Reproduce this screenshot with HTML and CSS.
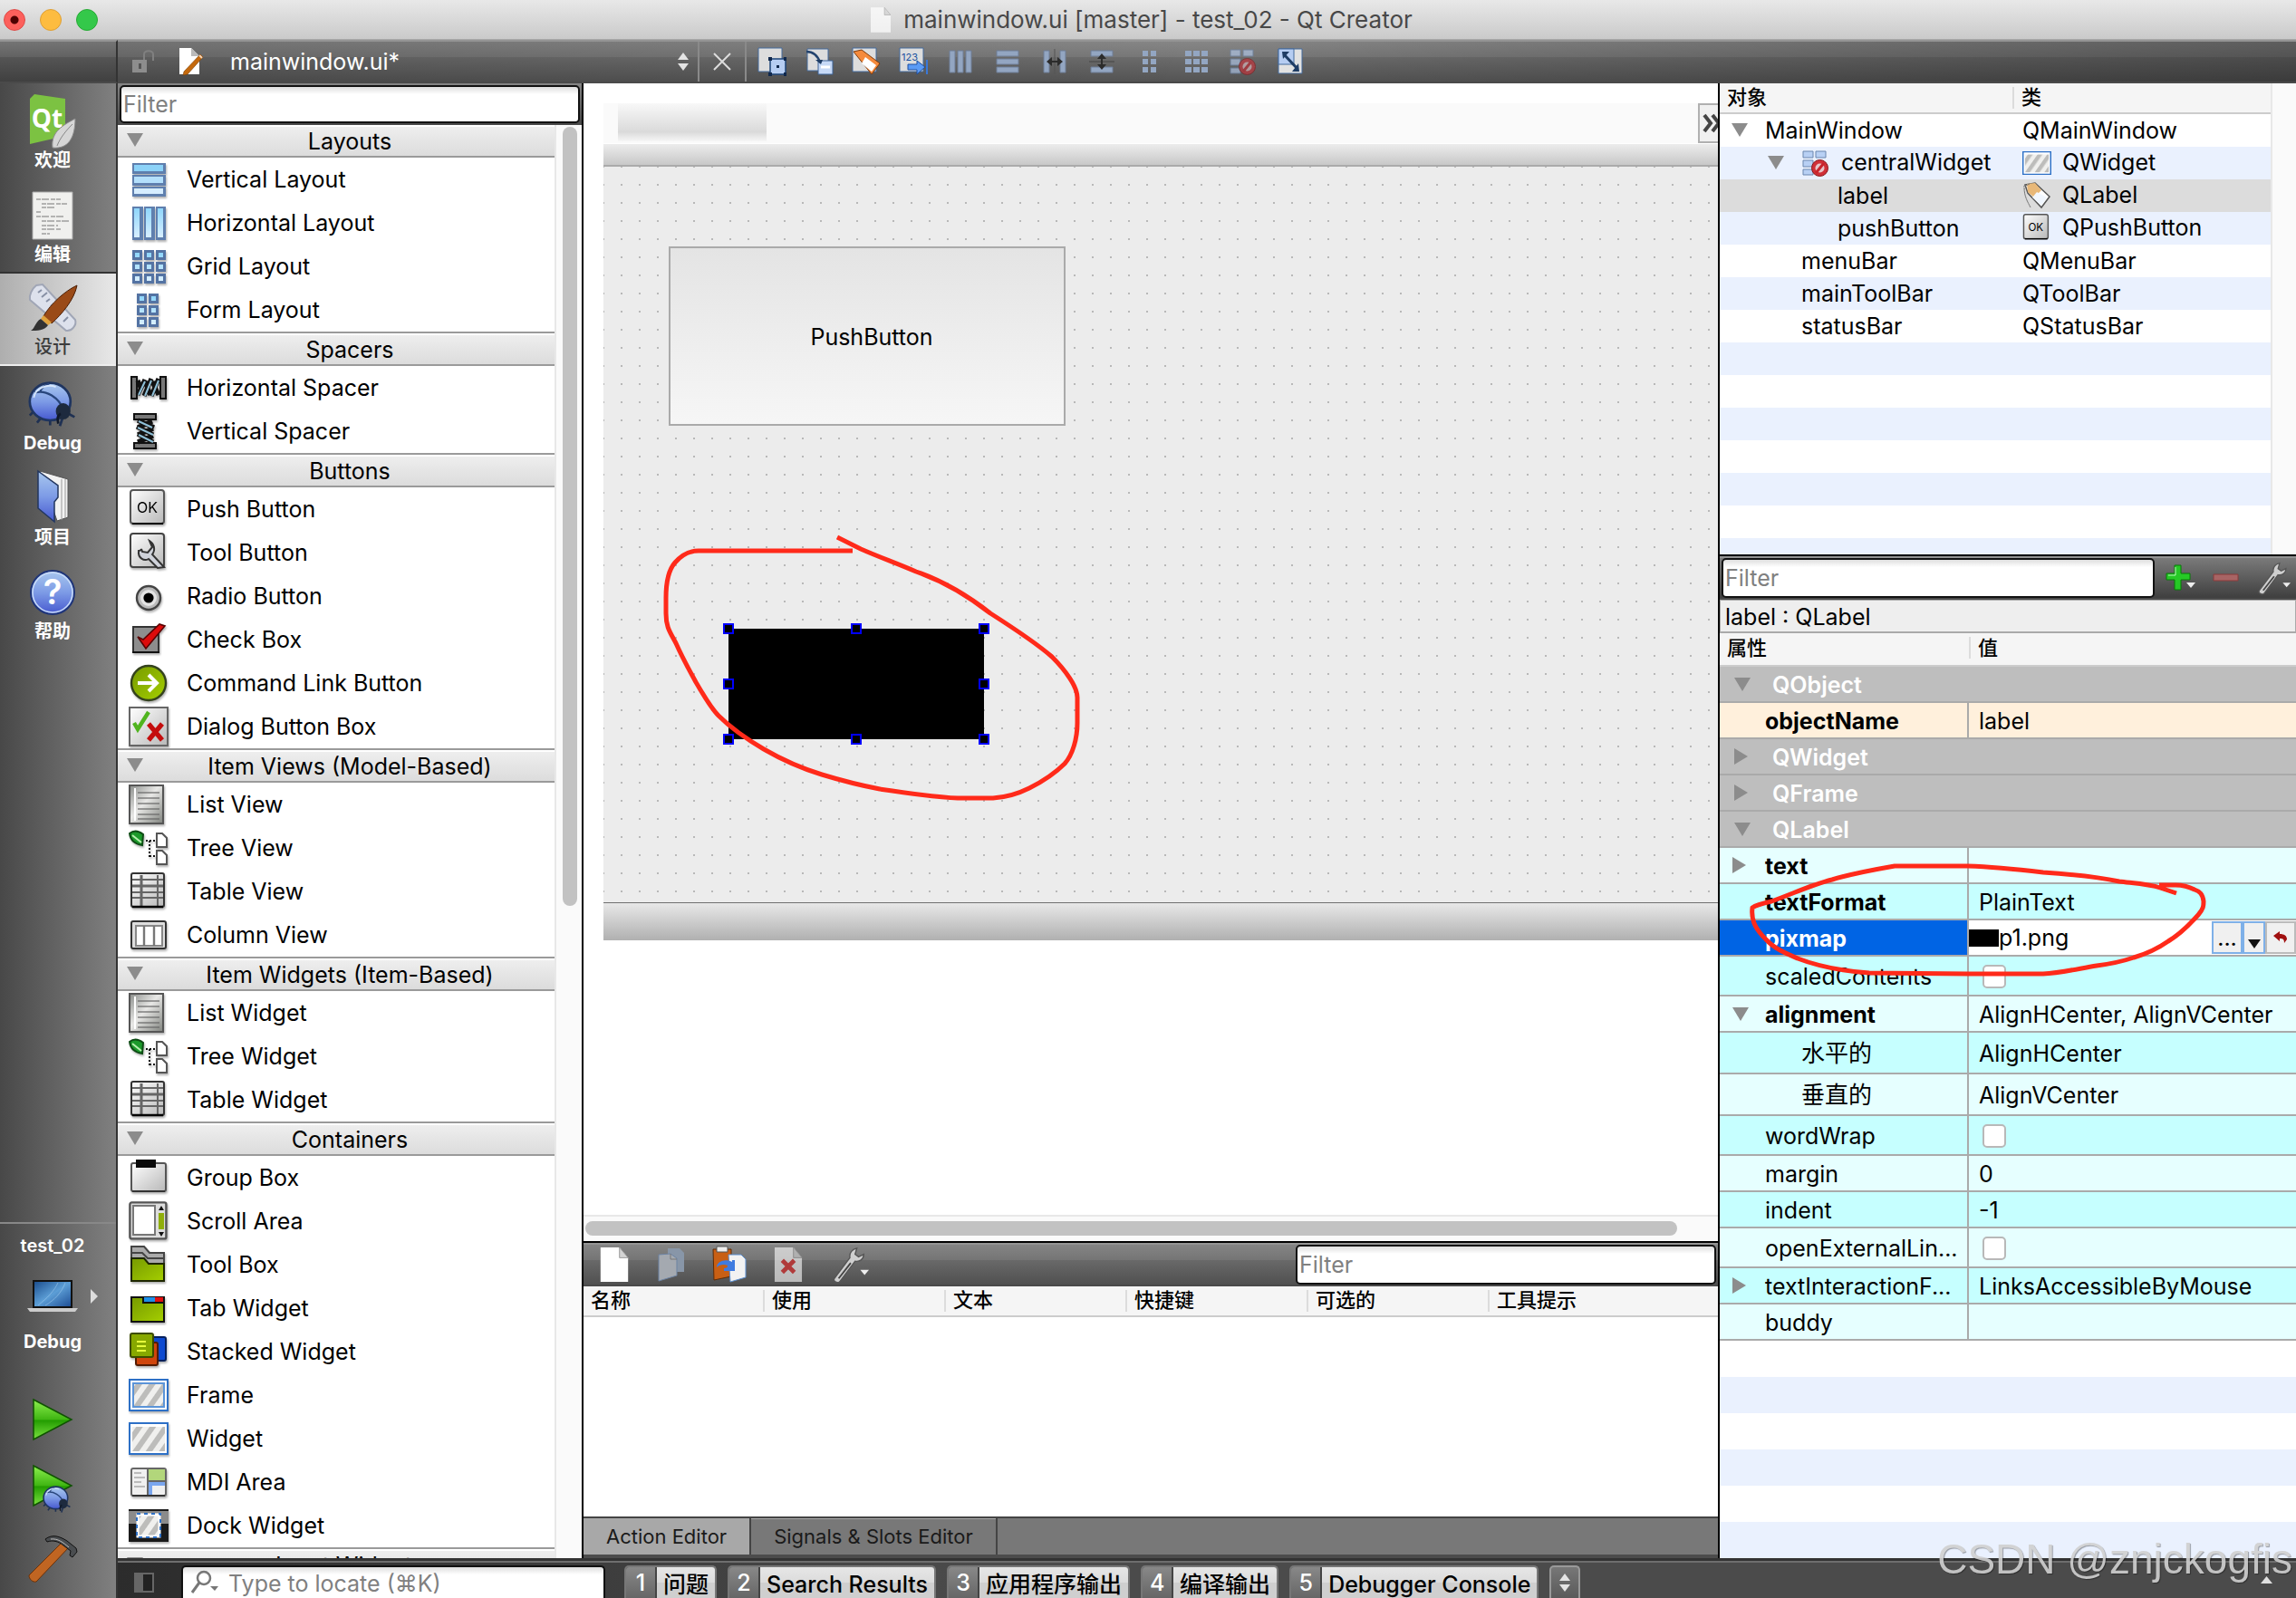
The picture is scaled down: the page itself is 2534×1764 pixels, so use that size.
FILE: index.html
```html
<!DOCTYPE html>
<html lang="zh-CN">
<head>
<meta charset="utf-8">
<title>mainwindow.ui [master] - test_02 - Qt Creator</title>
<link rel="stylesheet" href="styles.css">
</head>
<body>
<svg class="defs" width="0" height="0" aria-hidden="true">
  <defs>
    <linearGradient id="blueV" x2="0" y2="1"><stop offset="0" stop-color="#8fd6fb"/><stop offset="1" stop-color="#d8efff"/></linearGradient>
    <linearGradient id="grayV" x2="1" y2="1"><stop offset="0" stop-color="#fff"/><stop offset="1" stop-color="#b8b8b8"/></linearGradient>
    <linearGradient id="grayD" x2="1" y2="1"><stop offset="0" stop-color="#8a8d8a"/><stop offset=".45" stop-color="#e8e8e6"/><stop offset="1" stop-color="#7f827d"/></linearGradient>
    <linearGradient id="limeV" x2="1" y2="1"><stop offset="0" stop-color="#769a00"/><stop offset="1" stop-color="#a5cf00"/></linearGradient>
    <linearGradient id="indigo" x2="0" y2="1"><stop offset="0" stop-color="#a9c8ee"/><stop offset=".5" stop-color="#7d9be6"/><stop offset="1" stop-color="#4658cf"/></linearGradient>
    <linearGradient id="play" x2="0" y2="1"><stop offset="0" stop-color="#8df04e"/><stop offset=".5" stop-color="#3fb512"/><stop offset=".52" stop-color="#229c00"/><stop offset="1" stop-color="#7be33f"/></linearGradient>
    <linearGradient id="steel" x2="1" y2="1"><stop offset="0" stop-color="#bfc7d2"/><stop offset="1" stop-color="#9aa4b4"/></linearGradient>
    <linearGradient id="screen" x2="1" y2="1"><stop offset="0" stop-color="#1c4f8f"/><stop offset=".5" stop-color="#5c9ed6"/><stop offset="1" stop-color="#1f4f96"/></linearGradient>
    <pattern id="stripes" width="6" height="6" patternUnits="userSpaceOnUse" patternTransform="rotate(35)"><path fill="#f0f0ee" d="M0 0h6v6H0z"/><path fill="#bdbdbb" d="M0 0h3v6H0z"/></pattern>
    <symbol id="i-vlayout" viewBox="0 0 22 22"><path fill="#5f7fae" d="M2 2h18.500v6H2zM2 8.500h18.500v6H2zM2 15h18.500v5.500H2z"/><path fill="#8cd2f8" d="M3 3h16v3.500H3z"/><path fill="#b4e0fc" d="M3 9.500h16V13H3z"/><path fill="#d6edff" d="M3 16h16v3H3z"/></symbol>
    <symbol id="i-hlayout" viewBox="0 0 22 22"><path fill="#5f7fae" d="M2 2h6v18.500H2zM8.500 2h6v18.500h-6zM15 2h5.500v18.500H15z"/><path fill="url(#blueV)" d="M3 3h3v16H3zM9.500 3h3v16h-3zM16 3h3v16h-3z"/></symbol>
    <symbol id="i-glayout" viewBox="0 0 22 22"><path fill="#5473a3" d="M2 2h5.500v5.500H2zM8.500 2H14v5.500H8.500zM15 2h5.500v5.500H15zM2 8.500h5.500V14H2zM8.500 8.500H14V14H8.500zM15 8.500h5.500V14H15zM2 15h5.500v5.500H2zM8.500 15H14v5.500H8.500zM15 15h5.500v5.500H15z"/><path fill="url(#blueV)" d="M3.500 3.500h2.500v2.500H3.500zM10 3.500h2.500v2.500H10zM16.500 3.500H19v2.500h-2.500zM3.500 10h2.500v2.500H3.500zM10 10h2.500v2.500H10zM16.500 10H19v2.500h-2.500zM3.500 16.500h2.500V19H3.500zM10 16.500h2.500V19H10zM16.500 16.500H19V19h-2.500z"/></symbol>
    <symbol id="i-flayout" viewBox="0 0 22 22"><path fill="#5473a3" d="M4.500 2H10v5.500H4.500zM11 2h5.500v5.500H11zM4.500 8.500H10V14H4.500zM11 8.500h5.500V14H11zM4.500 15H10v5.500H4.500zM11 15h5.500v5.500H11z"/><path fill="url(#blueV)" d="M6 3.500h2.500v2.500H6zM12.500 3.500H15v2.500h-2.500zM6 10h2.500v2.500H6zM12.500 10H15v2.500h-2.500zM6 16.500h2.500V19H6zM12.500 16.500H15V19h-2.500z"/></symbol>
    <symbol id="i-hspacer" viewBox="0 0 22 22"><path fill="#777" stroke="#111" d="M1.500 5h3v12h-3zM17.500 5h3v12h-3z"/><path fill="none" stroke="#111" stroke-width="2.600" d="M5 15L9 6.500M8.500 15.500l4-9.500M12.500 15.500l4-9.500M5 7L7 12M9 7.500l3 7.500M13 7.500l3.500 7.500"/><path fill="none" stroke="#8fc0d8" d="M5.500 15L9 7.500M9 15.500l3.500-8.500M13 15.500l3.500-8.500"/></symbol>
    <symbol id="i-vspacer" viewBox="0 0 22 22"><path fill="#777" stroke="#111" d="M3 1.500h12v3H3zM3 17.500h12v3H3z"/><path fill="none" stroke="#111" stroke-width="2.600" d="M5 5l9 4M4.500 8.500l9 4.500M5 12.500l8.500 4.500M13 5.500L5 9M13.500 9.500L5 13M13.500 13.500L5 17"/><path fill="none" stroke="#8fc0d8" d="M5.500 5.500L13 9M5 9l8.500 4M5.500 13l8 4"/></symbol>
    <symbol id="i-ok" viewBox="0 0 22 22"><rect x="1" y=".5" width="18.500" height="18.500" rx="1.500" fill="url(#grayV)" stroke="#555"/><path stroke="#000" d="M2 19h17" fill="none"/><text x="10.200" y="13" font-family="Inter, sans-serif" font-size="8" text-anchor="middle" fill="#000">OK</text></symbol>
    <symbol id="i-tool" viewBox="0 0 22 22"><rect x="1" y=".5" width="18.500" height="18.500" rx="1.500" fill="url(#grayV)" stroke="#444"/><path d="M19.500 19l-6.500-7c2-2.500 1-6-1.500-7.500L13 8l-2.500 3-3-.5C7 8 7 10 5.500 10c-.5 4 3 6 5.500 4.500l5 5z" fill="#cfd2da" stroke="#333"/></symbol>
    <symbol id="i-radio" viewBox="0 0 22 22"><circle cx="11" cy="12" r="6.500" fill="#bbb" stroke="#444" stroke-width="1.200"/><circle cx="11" cy="12" r="4.500" fill="#e4e4e4"/><circle cx="11" cy="12" r="2.800" fill="#000"/></symbol>
    <symbol id="i-check" viewBox="0 0 22 22"><path fill="#8d8d8d" stroke="#333" d="M2.500 4h14v14h-14z"/><path stroke="#111" d="M2 18h15" fill="none"/><path d="M5 9.500l3 1.500L17 2.500l3 1L9.500 16z" fill="#dd0b0b" stroke="#5a0000" stroke-width=".8"/></symbol>
    <symbol id="i-link" viewBox="0 0 22 22"><circle cx="11" cy="11" r="9.500" fill="url(#limeV)" stroke="#34421d" stroke-width="1.200"/><path d="M5 11h10M11 6.500l4.500 4.500-4.500 4.500" fill="none" stroke="#fff" stroke-width="2"/></symbol>
    <symbol id="i-dialog" viewBox="0 0 22 22"><path fill="url(#grayV)" stroke="#666" d="M.5.500h21v21H.5z"/><path d="M3 9l2 3.500L11 3" fill="none" stroke="#4fb41e" stroke-width="2.200"/><path d="M11 9.500l7.500 9M18.500 9.500l-7.500 9" stroke="#c40d0d" stroke-width="2.600"/></symbol>
    <symbol id="i-list" viewBox="0 0 22 22"><path fill="url(#grayD)" stroke="#555" d="M.5.500h18.500v21H.5z"/><path d="M5 4.500h12M5 7.500h12M5 10.500h12M5 13.500h12M5 16.500h12M5 19h12" stroke="#666" opacity=".6"/><path d="M3.500 2v18" stroke="#fff"/></symbol>
    <symbol id="i-tree" viewBox="0 0 22 22"><path d="M.5 3C3 1 6 2 8 3.500l-.5 6C4 9 1 7 .5 3z" fill="#1c9a2b" stroke="#0d4c14"/><path d="M2 4l5 4" stroke="#b8f0b0"/><path d="M9.500 7h5M11.500 7v9M11.500 15.500H15" stroke="#111" stroke-dasharray="1 1" fill="none"/><path d="M15.500 3h3l2.500 2.500v5h-5.500zM15.500 12.500h3L21 15v5h-5.500z" fill="#fff" stroke="#555"/></symbol>
    <symbol id="i-table" viewBox="0 0 22 22"><rect x="1.500" y="1" width="18" height="18.500" rx="1" fill="url(#grayV)" stroke="#333"/><path d="M2 4.500h17M2 11.500h17M2 14.500h17M16 2v17" stroke="#666" fill="none"/><path d="M2 8h17M7 2v17" stroke="#666" stroke-width="1.500"/><path d="M2 19.500h17" stroke="#000" stroke-width="1.200"/></symbol>
    <symbol id="i-column" viewBox="0 0 22 22"><rect x="1.500" y="3.500" width="19" height="15" rx="1" fill="#ddd" stroke="#333"/><path fill="#fff" stroke="#888" d="M4 6h14.500v11H4z"/><path d="M8.500 6v11M14 6v11" stroke="#777" stroke-width="1.200"/></symbol>
    <symbol id="i-group" viewBox="0 0 22 22"><rect x="1.500" y="3" width="19" height="15.500" rx="1" fill="url(#grayV)" stroke="#555"/><path d="M4 1h11v4.500H4z" fill="#0a0a0a"/><path d="M2 18.500h18" stroke="#333"/></symbol>
    <symbol id="i-scroll" viewBox="0 0 22 22"><rect x=".7" y=".7" width="20" height="20" rx="1" fill="#ddd" stroke="#555" stroke-width="1.200"/><path fill="#fff" stroke="#777" d="M2.500 2.500h12v16h-12z"/><path fill="#8fae0a" d="M16.500 6.500h3v9h-3z"/><path d="M16.500 5L18 2.500 19.500 5zM16.500 17l1.500 2.500 1.500-2.500z" fill="#111"/></symbol>
    <symbol id="i-toolbox" viewBox="0 0 22 22"><path d="M1.500 1h7l3 3.500h8v6h-18z" fill="#aaa" stroke="#444"/><path d="M1.500 4.500h6l3 3h9" fill="none" stroke="#444"/><path d="M1.500 7.500h7l2.500 3h8.500v9.500h-18z" fill="url(#limeV)" stroke="#1d2600"/></symbol>
    <symbol id="i-tab" viewBox="0 0 22 22"><path d="M1.500 5h18v13.500h-18z" fill="url(#limeV)" stroke="#111"/><path d="M8 5h6.500v2.500H8z" fill="#1d8fe8"/><path d="M14.500 5H19v2.500h-4.500z" fill="#e01010"/><path d="M8 5v3h12" fill="none" stroke="#111"/></symbol>
    <symbol id="i-stacked" viewBox="0 0 22 22"><rect x="12" y="3" width="8.500" height="13" rx="1" fill="#0d49d0" stroke="#06205c"/><rect x="4" y="6" width="12" height="12.500" rx="1" fill="#d0450c" stroke="#541a00"/><rect x="1" y="1" width="12.500" height="13" rx="1" fill="#87a800" stroke="#3c4b00"/><path d="M4.500 5.500h5M4.500 8h5M4.500 10.500h5" stroke="#e6ff3c"/></symbol>
    <symbol id="i-frame" viewBox="0 0 22 22"><path fill="#fff" stroke="#2d70c6" d="M.5 2.500h21v17H.5z"/><path fill="url(#stripes)" stroke="#5b94d8" d="M2.500 4.500h17v13h-17z"/></symbol>
    <symbol id="i-widget" viewBox="0 0 22 22"><path fill="#fff" stroke="#2d70c6" d="M.5 2.500h21v17H.5z"/><path fill="url(#stripes)" d="M2 4.500h18v13.500H2z"/></symbol>
    <symbol id="i-mdi" viewBox="0 0 22 22"><rect x="1.500" y="3.500" width="19" height="15" rx="1" fill="#f0f0f0" stroke="#666"/><path fill="#b2d67b" d="M11 4h9v6h-9z"/><path fill="#7aa6ee" d="M11 11h9v2h-9zM11 13h2v5h-2z"/><path d="M10.500 4v14M10.500 10.500H20" stroke="#666"/><path d="M3 6h4M3 8.500h6M3 11h4M3 13.500h6" stroke="#bbb"/><path d="M2 18.500h18" stroke="#333"/></symbol>
    <symbol id="i-dock" viewBox="0 0 22 22"><path fill="#1a1a1a" d="M0 2h22v18H0z"/><path fill="#8b8b8b" d="M0 3h22v7H0z"/><path fill="url(#stripes)" stroke="#fff" stroke-width="1.500" d="M5 5h12v12H5z"/><path d="M4.500 4.500h13v13h-13z" fill="none" stroke="#2d70c6" stroke-dasharray="2 2"/></symbol>
    <symbol id="i-nolayout" viewBox="0 0 32 32"><path fill="#b8d0f4" stroke="#6a86ae" d="M2 3h11v7H2zM16 3h11v7H16zM2 13h11v7H2zM2 23h11v6H2z"/><circle cx="20.500" cy="21.500" r="9" fill="#d03038" stroke="#8a1418"/><circle cx="20.500" cy="21.500" r="5" fill="#e6c4c8"/><path d="M16 27l9-11" stroke="#c8242c" stroke-width="3"/></symbol>
    <symbol id="i-label" viewBox="0 0 32 32"><path d="M3 4l11-2 16 15-9 12L6 13z" fill="#fff" stroke="#555" stroke-width="1.500"/><path d="M5 3l9-1 7 8-8 8-7-6z" fill="#e8b878"/><path d="M16 12l11 6-6 9-10-9z" fill="#f1f7ff"/><path d="M1 6l7-3M2 7c0 10 4 16 7 22" stroke="#777" fill="none"/></symbol>
    <symbol id="i-bug" viewBox="0 0 60 60"><path d="M6 40l-4 4M15 48l-4 5M27 50v6M46 40l11 6M42 48l-3 9M10 30l-6-2" stroke="#1f3153" stroke-width="3" fill="none"/><ellipse cx="27" cy="27" rx="25" ry="23" fill="url(#indigo)" stroke="#1f3560" stroke-width="3"/><path d="M8 16C22 12 38 22 44 38M26 5c-6 2-9 5-11 9" fill="none" stroke="#28457c" stroke-width="2.500"/><path d="M7 22C9 10 24 5 34 9" fill="none" stroke="#d6e6fb" stroke-width="2"/><ellipse cx="43" cy="39" rx="9" ry="10" fill="#1d2a3e"/><path d="M40 42c-5 2-4 8-3 12" stroke="#10192a" stroke-width="3" fill="none"/></symbol>
    <symbol id="i-wrench" viewBox="0 0 44 44"><path d="M4 38l18-24c-1-6 3-10 8-11l-2 7 4 3 6-3c0 6-5 9-10 8L10 42c-3 2-8-1-6-4z" fill="#cfcfcf" stroke="#555" stroke-width="1.500"/><path d="M9 38l14-18" stroke="#444" stroke-width="2" fill="none"/><path d="M34 28h10l-5 6z" fill="#eee"/></symbol>
    <symbol id="i-page" viewBox="0 0 32 40"><path d="M0 0h22l10 12v28H0z" fill="#fff"/><path d="M22 0v12h10z" fill="#d4d4d4" stroke="#999"/></symbol>
    <symbol id="i-updown" viewBox="0 0 12 20"><path d="M0 8l6-8 6 8zM0 12h12l-6 8z" fill="#e4e4e4"/></symbol>
  </defs>
</svg>

<header class="titlebar">
  <div class="lights"><i class="light red"></i><i class="light amber"></i><i class="light green"></i></div>
  <h1 class="window-title"><svg width="22" height="30"><use href="#i-page" opacity=".7"/></svg>mainwindow.ui [master] - test_02 - Qt Creator</h1>
</header>

<div class="workspace">
  <div class="toolbar corner"></div>
  <div class="toolbar editor-bar">
    <button class="file-combo">
      <svg width="26" height="26" viewBox="0 0 26 26"><path d="M0 11h16v14H0z" fill="#8d8d8d"/><path d="M13 11V5c0-5 10-5 10 0v7" fill="none" stroke="#808080" stroke-width="2"/><path d="M7 15h3v6H7z" fill="#555"/></svg>
      <svg width="28" height="32" viewBox="0 0 28 32"><path d="M1 1h13l9 9v20H1z" fill="#fff"/><path d="M14 1v9h9z" fill="#bbb"/><path d="M24 8l3 3L10 30l-5 1 1-4z" fill="#c4690d" stroke="#7a3f06" stroke-width=".6"/><path d="M23 9l3 3" stroke="#f6d6b8" stroke-width="2"/></svg>
      <span class="file-name">mainwindow.ui*</span>
      <svg width="12" height="20"><use href="#i-updown"/></svg>
    </button>
    <button class="close-doc" aria-label="Close"><svg width="20" height="20" viewBox="0 0 20 20"><path d="M1 1l18 18M19 1L1 19" stroke="#ddd" stroke-width="2"/></svg></button>
    <div class="tools">
      <button aria-label="Edit Widgets"><svg viewBox="0 0 32 32"><path fill="#ddd" stroke="#456a9c" d="M1 1h26v26H1z"/><path fill="#b6cdf2" stroke="#1e4478" stroke-width="1.500" d="M14 13h17v17H14z"/><path fill="#10284c" d="M12 11h4v4h-4zM29 11h3v4h-3zM12 28h4v4h-4zM29 28h3v4h-3zM21 20h3v3h-3z"/></svg></button>
      <button aria-label="Edit Signals/Slots"><svg viewBox="0 0 32 32"><path fill="#ddd" stroke="#456a9c" d="M3 2h23v24H3z"/><path fill="#c6d9f6" stroke="#3d6296" d="M15 15h16v15H15z"/><path d="M2 5c9 0 13 6 15 12" stroke="#24446e" stroke-width="2.500" fill="none"/><path d="M12 14h8l-2 5z" fill="#1e3c64"/><path d="M18 22h10" stroke="#fff" stroke-width="3"/></svg></button>
      <button aria-label="Edit Buddies"><svg viewBox="0 0 32 32"><path fill="#ddd" stroke="#456a9c" d="M1 1h26v26H1z"/><path d="M2 5l9-2 20 15-9 12z" fill="#f58a3c" stroke="#7e3b0c"/><path d="M15 11l12 9-5 7-11-9z" fill="#fff"/></svg></button>
      <button aria-label="Edit Tab Order"><svg viewBox="0 0 32 32"><path fill="#ddd" stroke="#456a9c" d="M1 1h26v26H1z"/><text x="12" y="15" font-family="Inter, sans-serif" font-size="11" text-anchor="middle" fill="#1c52a0">123</text><path d="M10 19h10v-4l9 7-9 8v-5H10z" fill="#5b9bf5" stroke="#1e4fa0"/><path d="M31 14v16" stroke="#3a78d8" stroke-width="2"/></svg></button>
      <button aria-label="Lay Out Horizontally"><svg viewBox="0 0 32 32"><path fill="#93a6c2" stroke="#6f7f98" d="M4 4h6v24H4zM13 4h6v24h-6zM22 4h6v24h-6z"/></svg></button>
      <button aria-label="Lay Out Vertically"><svg viewBox="0 0 32 32"><path fill="#93a6c2" stroke="#6f7f98" d="M4 4h24v6H4zM4 13h24v6H4zM4 22h24v6H4z"/></svg></button>
      <button aria-label="Lay Out Horizontally in Splitter"><svg viewBox="0 0 32 32"><path fill="#93a6c2" stroke="#6f7f98" d="M4 4h6v24H4zM22 4h6v24h-6z"/><path d="M16 2v28" stroke="#555"/><path d="M7 16l6-5v4h6v-4l6 5-6 5v-4h-6v4z" fill="#2c2c2c"/></svg></button>
      <button aria-label="Lay Out Vertically in Splitter"><svg viewBox="0 0 32 32"><path fill="#93a6c2" stroke="#6f7f98" d="M4 4h24v6H4zM4 22h24v6H4z"/><path d="M2 16h28" stroke="#444"/><path d="M16 7l5 6h-4v6h4l-5 6-5-6h4v-6h-4z" fill="#2c2c2c"/></svg></button>
      <button aria-label="Lay Out in a Form"><svg viewBox="0 0 32 32"><path fill="#93a6c2" d="M9 4h6v6H9zM18 4h6v6h-6zM9 13h6v6H9zM18 13h6v6h-6zM9 22h6v6H9zM18 22h6v6h-6z"/></svg></button>
      <button aria-label="Lay Out in a Grid"><svg viewBox="0 0 32 32"><path fill="#93a6c2" d="M4 4h7v6H4zM13 4h7v6h-7zM22 4h7v6h-7zM4 13h7v6H4zM13 13h7v6h-7zM22 13h7v6h-7zM4 22h7v6H4zM13 22h7v6h-7zM22 22h7v6h-7z"/></svg></button>
      <button aria-label="Break Layout"><svg viewBox="0 0 32 32" opacity=".6"><use href="#i-nolayout"/></svg></button>
      <button aria-label="Adjust Size"><svg viewBox="0 0 32 32"><path fill="#e2e2e2" stroke="#456a9c" d="M3 2h26v27H3z"/><path fill="#b6cdf2" stroke="#456a9c" d="M3 2h17v17H3z"/><path d="M9 8l15 16" stroke="#1e3c64" stroke-width="3"/><path d="M7 5h8l-7 8zM26 27h-8l7-9z" fill="#1e3c64"/></svg></button>
    </div>
  </div>

  <nav class="modes" aria-label="Modes">
    <button class="mode"><svg width="52" height="58" viewBox="0 0 52 58"><path d="M1 6l5-5 34 5v41L1 56z" fill="#7cc242"/><text x="20" y="38" font-family="Open Sans, sans-serif" font-weight="700" font-size="28" text-anchor="middle" fill="#fff">Qt</text><path d="M51 28C38 35 24 42 26 60c18 2 25-12 25-32z" fill="#d6d6d6" stroke="#8b8b8b"/><path d="M48 34C40 42 34 50 31 58" stroke="#888" fill="none"/></svg>欢迎</button>
    <button class="mode"><svg width="52" height="54" viewBox="0 0 52 54"><path d="M4 1h44v52H4z" fill="#f0f0ee" stroke="#aaa"/><path d="M8 9h27M14 14h28M14 18h14M8 23h5M8 28h30M14 33h30M14 38h18M14 42h22M14 47h9" stroke="#777" stroke-dasharray="5 1 8 2"/></svg>编辑</button>
    <button class="mode active"><svg width="56" height="54" viewBox="0 0 56 54"><path d="M10 2l7-1 36 39c2 6-4 13-10 12L3 18C2 13 5 6 10 2z" fill="#dde1ec" stroke="#a0a6b6" stroke-width="2"/><path d="M12 10l4-3M16 15l6-5M21 20l4-3M26 25l4-3M40 42l5-5" stroke="#8790a5" stroke-width="2"/><path d="M55 2C42 8 26 22 18 36l9 8C38 34 52 18 55 2z" fill="#9a4a17" stroke="#4a1e05"/><path d="M18 35l9 8-4 3-8-7z" fill="#e0a23c"/><path d="M15 39l8 7c-4 6-12 6-19 6 5-3 5-10 11-13z" fill="#333"/></svg>设计</button>
    <button class="mode"><svg width="58" height="54"><use href="#i-bug"/></svg>Debug</button>
    <button class="mode"><svg width="52" height="58" viewBox="0 0 52 58"><path d="M12 1l31 9v42l-12 4z" fill="#f2f2f2" stroke="#555"/><path d="M36 10v45M40 10v43" stroke="#999"/><path d="M10 1l22 16v13l-4 5v22L10 42z" fill="url(#indigo)" stroke="#22365f" stroke-width="1.500"/></svg>项目</button>
    <button class="mode"><svg width="52" height="54" viewBox="0 0 52 54"><circle cx="26" cy="27" r="24" fill="url(#indigo)" stroke="#1f3578" stroke-width="2"/><circle cx="26" cy="27" r="22" fill="none" stroke="#c9dcf8" stroke-width="1.500"/><text x="26" y="40" font-family="Inter, sans-serif" font-weight="600" font-size="38" text-anchor="middle" fill="#fff">?</text></svg>帮助</button>
    <div class="kit">
      <button class="kit-select"><span class="kit-name">test_02</span>
        <span class="kit-device"><svg width="56" height="36" viewBox="0 0 56 36"><path d="M6 0h44v31H6z" fill="#111"/><path d="M8 2h40v27H8z" fill="url(#screen)"/><path d="M12 28C22 20 30 12 34 3M20 28c10-6 18-14 22-25" stroke="#9cc8ec" opacity=".6" fill="none"/><path d="M0 31h56l-3 4H3z" fill="#ccc"/></svg><i class="kit-arrow"></i></span>
        <span class="kit-build">Debug</span></button>
      <button aria-label="Run"><svg width="46" height="48" viewBox="0 0 46 48"><path d="M2 2l42 22L2 46z" fill="url(#play)" stroke="#0f5200" stroke-width="1.500"/></svg></button>
      <button aria-label="Start Debugging"><svg width="46" height="52" viewBox="0 0 46 52"><path d="M2 1l42 22L2 45z" fill="url(#play)" stroke="#0f5200" stroke-width="1.500"/><svg x="10" y="22" width="36" height="32"><use href="#i-bug"/></svg></svg></button>
      <button aria-label="Build"><svg width="56" height="52" viewBox="0 0 56 52"><path d="M2 44L40 6l7 6L10 51c-4 1-8-3-8-7z" fill="#c06522" stroke="#6b3108"/><path d="M20 4c8-6 16-3 24 2l10 8 1 4-5 6-3-2 1-5-8-6C34 6 28 5 22 7z" fill="#4a4d50" stroke="#111"/><path d="M26 4c8-1 14 4 20 9" stroke="#bbb" fill="none"/></svg></button>
    </div>
  </nav>

  <aside class="widget-box">
    <div class="filter-wrap"><input class="filter" type="text" placeholder="Filter" aria-label="Filter widgets"></div>
    <div class="widget-scroll">
      <div class="widget-list">
        <button class="group-head">Layouts</button>
        <ul>
          <li><svg><use href="#i-vlayout"/></svg>Vertical Layout</li>
          <li><svg><use href="#i-hlayout"/></svg>Horizontal Layout</li>
          <li><svg><use href="#i-glayout"/></svg>Grid Layout</li>
          <li><svg><use href="#i-flayout"/></svg>Form Layout</li>
        </ul>
        <button class="group-head">Spacers</button>
        <ul>
          <li><svg><use href="#i-hspacer"/></svg>Horizontal Spacer</li>
          <li><svg><use href="#i-vspacer"/></svg>Vertical Spacer</li>
        </ul>
        <button class="group-head">Buttons</button>
        <ul>
          <li><svg><use href="#i-ok"/></svg>Push Button</li>
          <li><svg><use href="#i-tool"/></svg>Tool Button</li>
          <li><svg><use href="#i-radio"/></svg>Radio Button</li>
          <li><svg><use href="#i-check"/></svg>Check Box</li>
          <li><svg><use href="#i-link"/></svg>Command Link Button</li>
          <li><svg><use href="#i-dialog"/></svg>Dialog Button Box</li>
        </ul>
        <button class="group-head">Item Views (Model-Based)</button>
        <ul>
          <li><svg><use href="#i-list"/></svg>List View</li>
          <li><svg><use href="#i-tree"/></svg>Tree View</li>
          <li><svg><use href="#i-table"/></svg>Table View</li>
          <li><svg><use href="#i-column"/></svg>Column View</li>
        </ul>
        <button class="group-head">Item Widgets (Item-Based)</button>
        <ul>
          <li><svg><use href="#i-list"/></svg>List Widget</li>
          <li><svg><use href="#i-tree"/></svg>Tree Widget</li>
          <li><svg><use href="#i-table"/></svg>Table Widget</li>
        </ul>
        <button class="group-head">Containers</button>
        <ul>
          <li><svg><use href="#i-group"/></svg>Group Box</li>
          <li><svg><use href="#i-scroll"/></svg>Scroll Area</li>
          <li><svg><use href="#i-toolbox"/></svg>Tool Box</li>
          <li><svg><use href="#i-tab"/></svg>Tab Widget</li>
          <li><svg><use href="#i-stacked"/></svg>Stacked Widget</li>
          <li><svg><use href="#i-frame"/></svg>Frame</li>
          <li><svg><use href="#i-widget"/></svg>Widget</li>
          <li><svg><use href="#i-mdi"/></svg>MDI Area</li>
          <li><svg><use href="#i-dock"/></svg>Dock Widget</li>
        </ul>
        <button class="group-head">Input Widgets</button>
      </div>
      <div class="vtrack"><div class="vthumb"></div></div>
    </div>
  </aside>

  <main class="center">
    <section class="canvas">
      <div class="form">
        <div class="form-menubar"><div class="menu-placeholder"></div><button class="menu-more" aria-label="More"><svg width="24" height="20" viewBox="0 0 24 20"><path d="M2 1l7 9-7 9M11 1l7 9-7 9" fill="none" stroke="#444" stroke-width="4"/></svg></button></div>
        <div class="form-toolbar"></div>
        <div class="form-body">
          <button class="push-button">PushButton</button>
          <div class="pixmap-label"><i></i><i></i><i></i><i></i><i></i><i></i><i></i><i></i></div>
        </div>
        <div class="form-statusbar"></div>
        <svg class="mark form-mark" width="560" height="360" viewBox="700 560 560 360"><path d="M941 608H771C760 608 752 613 745 621C737 630 735 645 735 660V677C735 692 739 697 746 710C754 728 761 740 768 753C777 768 784 781 793 790C809 806 826 817 843 827C862 838 884 848 907 855C930 862 950 867 971 871C1005 876 1032 880 1057 881H1096C1112 880 1124 876 1136 870C1152 862 1163 855 1175 843C1184 833 1189 815 1189 798V770C1189 758 1176 740 1161 725C1145 711 1118 693 1093 677C1070 659 1040 641 1011 631C990 622 968 614 950 606L924 593"/></svg>
      </div>
    </section>
    <div class="htrack"><div class="hthumb"></div></div>
    <section class="action-dock">
      <div class="toolbar dock-bar">
        <button aria-label="New"><svg width="32" height="38"><use href="#i-page"/></svg></button>
        <button aria-label="Copy"><svg width="32" height="40" viewBox="0 0 32 40"><path d="M13 2h13l5 5v21H13z" fill="#8896a8"/><path d="M3 9l13-1 7 5v19L3 38z" fill="#a4a9b0" stroke="#6d83a3"/><path d="M16 8v6h7" fill="none" stroke="#777"/></svg></button>
        <button aria-label="Paste"><svg width="38" height="40" viewBox="0 0 38 40"><path d="M1 3l20 0v30L2 37z" fill="#c85f14" stroke="#5c2b06"/><path d="M5 0h12v6H5z" fill="#eee" stroke="#555"/><path d="M18 9h14l5 5v20l-17 5z" fill="#f2f2f2" stroke="#5c8fd0"/><path d="M5 23c0-7 10-10 17-6v-2h3v12H13v-3c3 0 4-1 4-3-4-2-9-1-12 2z" fill="#3f7be0"/></svg></button>
        <button aria-label="Delete"><svg width="32" height="38" viewBox="0 0 32 40"><use href="#i-page" opacity=".6"/><path d="M9 15l14 14M23 15L9 29" stroke="#b03a3a" stroke-width="5"/></svg></button>
        <button aria-label="Configure"><svg width="44" height="42"><use href="#i-wrench"/></svg></button>
        <input class="filter" type="text" placeholder="Filter" aria-label="Filter actions">
      </div>
      <table class="actions">
        <thead><tr><th>名称</th><th>使用</th><th>文本</th><th>快捷键</th><th>可选的</th><th>工具提示</th></tr></thead>
      </table>
      <div class="dock-tabs"><button class="tab active">Action Editor</button><button class="tab">Signals &amp; Slots Editor</button></div>
    </section>
  </main>

  <aside class="side">
    <section class="objects">
      <div class="objects-body">
      <table class="tree">
        <thead><tr><th>对象</th><th>类</th></tr></thead>
        <tbody>
          <tr><td class="lv1"><i class="tri"></i>MainWindow</td><td>QMainWindow</td></tr>
          <tr><td class="lv2 has-icon"><i class="tri"></i><svg><use href="#i-nolayout"/></svg>centralWidget</td><td><svg><use href="#i-widget"/></svg>QWidget</td></tr>
          <tr class="selected"><td class="lv3">label</td><td><svg><use href="#i-label"/></svg>QLabel</td></tr>
          <tr><td class="lv3">pushButton</td><td><svg><use href="#i-ok"/></svg>QPushButton</td></tr>
          <tr><td class="lv2">menuBar</td><td>QMenuBar</td></tr>
          <tr><td class="lv2">mainToolBar</td><td>QToolBar</td></tr>
          <tr><td class="lv2">statusBar</td><td>QStatusBar</td></tr>
        </tbody>
      </table>
      </div>
    </section>
    <section class="properties">
      <div class="toolbar prop-bar">
        <input class="filter" type="text" placeholder="Filter" aria-label="Filter properties">
        <button aria-label="Add"><svg width="34" height="30" viewBox="0 0 34 30"><path d="M10 1h7v9h10v7H17v11h-7V17H1v-7h9z" fill="#26c926" stroke="#067a06"/><path d="M11 3v9H3" stroke="#b6f5b6" fill="none"/><path d="M23 20h10l-5 6z" fill="#eee"/></svg></button>
        <button aria-label="Remove"><svg width="30" height="30" viewBox="0 0 30 30"><path d="M1 11h27v7H1z" fill="#a86464" stroke="#8a3a3a"/></svg></button>
        <button aria-label="Configure"><svg width="38" height="38"><use href="#i-wrench"/></svg></button>
      </div>
      <div class="object-name">label : QLabel</div>
      <div class="prop-wrap">
      <table class="props">
        <thead><tr><th>属性</th><th>值</th></tr></thead>
        <tbody>
          <tr class="group"><td colspan="2"><i class="tri"></i>QObject</td></tr>
          <tr class="cream"><td class="changed">objectName</td><td>label</td></tr>
          <tr class="group"><td colspan="2"><i class="tri closed"></i>QWidget</td></tr>
          <tr class="group"><td colspan="2"><i class="tri closed"></i>QFrame</td></tr>
          <tr class="group"><td colspan="2"><i class="tri"></i>QLabel</td></tr>
          <tr class="pale"><td class="changed"><i class="tri closed"></i>text</td><td></td></tr>
          <tr class="aqua"><td class="changed">textFormat</td><td>PlainText</td></tr>
          <tr class="current"><td class="changed">pixmap</td><td><div class="pix-edit"><i class="swatch"></i><span>p1.png</span><button class="mini">...</button><button class="mini narrow" aria-label="Menu"><svg width="14" height="10" viewBox="0 0 14 10"><path d="M0 0h14L7 10z" fill="#111"/></svg></button><button class="mini reset" aria-label="Reset"><svg width="16" height="14" viewBox="0 0 16 14"><path d="M0 5l7-5v3c5 0 8 2 8 6l-3 4c0-4-1-5-5-5v3z" fill="#a01010"/></svg></button></div></td></tr>
          <tr class="aqua h44"><td><label for="scaled">scaledContents</label></td><td><input id="scaled" type="checkbox"></td></tr>
          <tr class="pale"><td class="changed"><i class="tri"></i>alignment</td><td>AlignHCenter, AlignVCenter</td></tr>
          <tr class="aqua h46"><td class="sub">水平的</td><td>AlignHCenter</td></tr>
          <tr class="pale h46"><td class="sub">垂直的</td><td>AlignVCenter</td></tr>
          <tr class="aqua h44"><td><label for="wrap">wordWrap</label></td><td><input id="wrap" type="checkbox"></td></tr>
          <tr class="pale"><td>margin</td><td>0</td></tr>
          <tr class="aqua"><td>indent</td><td>-1</td></tr>
          <tr class="pale h44"><td><label for="links">openExternalLin...</label></td><td><input id="links" type="checkbox"></td></tr>
          <tr class="aqua"><td><i class="tri closed"></i>textInteractionF...</td><td>LinksAccessibleByMouse</td></tr>
          <tr class="pale"><td>buddy</td><td></td></tr>
        </tbody>
      </table>
      <svg class="mark prop-mark" width="510" height="130" viewBox="1928 950 510 130"><path d="M2402 986L2384 980C2372 976 2355 975 2339 973C2310 967 2285 965 2255 963C2220 959 2200 957 2172 956H2091C2068 960 2045 964 2022 971C1998 977 1978 987 1955 995C1946 997 1938 999 1934 1002C1932 1018 1940 1028 1949 1037C1958 1047 1970 1052 1984 1058C2010 1068 2035 1072 2063 1074L2172 1075H2255C2275 1074 2295 1069 2314 1066C2330 1064 2343 1061 2355 1057C2372 1052 2383 1046 2393 1039C2408 1030 2418 1019 2426 1010C2432 1003 2432 1000 2432 995C2431 987 2428 984 2422 982C2414 978 2408 977 2401 977H2383"/></svg>
      </div>
      <div class="prop-filler"></div>
    </section>
  </aside>

  <footer class="statusbar">
    <button class="side-toggle" aria-label="Toggle sidebar"></button>
    <label class="locator"><svg width="32" height="30" viewBox="0 0 32 30"><circle cx="15" cy="9" r="7" fill="none" stroke="#777" stroke-width="2.500"/><path d="M10 14L2 25" stroke="#777" stroke-width="3"/><path d="M22 18h9l-4 5z" fill="#777"/></svg><input type="text" placeholder="Type to locate (⌘K)" aria-label="Type to locate"></label>
    <div class="panes">
      <button class="pane"><b>1</b><span>问题</span></button>
      <button class="pane"><b>2</b><span>Search Results</span></button>
      <button class="pane"><b>3</b><span>应用程序输出</span></button>
      <button class="pane"><b>4</b><span>编译输出</span></button>
      <button class="pane"><b>5</b><span>Debugger Console</span></button>
      <button class="pane-more" aria-label="Panes"><svg width="12" height="20"><use href="#i-updown"/></svg></button>
    </div>
    <button class="output-toggle" aria-label="Show output"><svg width="13" height="8" viewBox="0 0 13 8"><path d="M0 8l6.500-8L13 8z" fill="#e0e0e0"/></svg></button>
  </footer>
</div>
<div class="watermark">CSDN @znjckogfis</div>
</body>
</html>
```

FILE: styles.css
```css
* { box-sizing: border-box; }

body {
  margin: 0;
  height: 100vh;
  display: flex;
  flex-direction: column;
  overflow: hidden;
  position: relative;
  background: #fff;
  color: #000;
  font: 400 25px/30px Inter, "Noto Sans CJK SC", sans-serif;
}

button {
  margin: 0;
  padding: 0;
  border: 0;
  background: none;
  color: inherit;
  font: inherit;
}

input { font: inherit; }
svg { flex: none; display: block; overflow: visible; }
.defs { position: absolute; }
i { font-style: normal; }

/* Title bar */
.titlebar {
  flex: none;
  height: 44px;
  display: flex;
  align-items: center;
  background: linear-gradient(#e8e8e8, #cacaca);
  border-bottom: 1px solid #a8a8a8;
}
.lights { display: flex; gap: 16px; width: 110px; padding-left: 4px; flex: none; }
.light { width: 24px; height: 24px; border-radius: 50%; }
.red { background: radial-gradient(circle, #4d0000 4px, #fc605c 5px); border: 1px solid #df4744; }
.amber { background: #fdbc40; border: 1px solid #de9f34; }
.green { background: #34c84a; border: 1px solid #27aa35; }
.window-title {
  flex: 1;
  margin: 0;
  padding-right: 124px;
  display: flex;
  justify-content: center;
  align-items: center;
  gap: 14px;
  font-size: 26px;
  font-weight: 400;
  color: #484848;
}

/* Main grid */
.workspace {
  flex: 1;
  min-height: 0;
  display: grid;
  grid-template-columns: 130px 514px minmax(0, 1fr) 638px;
  grid-template-rows: 48px minmax(0, 1fr) 44px;
}
.toolbar {
  background: linear-gradient(#848484, #757575 38%, #696969 39%, #505050);
  border-top: 2px solid #949494;
  border-bottom: 2px solid #4a4a4a;
}
.corner { border-right: 2px solid #333; background: linear-gradient(#747474, #626262 38%, #555 39%, #404040); }
.editor-bar {
  grid-column: 2 / -1;
  display: flex;
  background: linear-gradient(90deg, rgba(0,0,0,.15), transparent 50%, rgba(0,0,0,.3)), linear-gradient(#868686, #787878 38%, #6c6c6c 39%, #545454);
}
.file-combo {
  width: 642px;
  display: flex;
  align-items: center;
  padding: 0 10px 0 16px;
  border-right: 2px solid #8a8a8a;
  color: #fff;
  text-align: left;
}
.file-combo svg:first-child { margin-right: 25px; }
.file-name { flex: 1; margin-left: 29px; }
.close-doc { width: 52px; border-right: 2px solid #8a8a8a; display: grid; place-items: center; }
.tools { display: flex; align-items: center; gap: 20px; padding-left: 12px; }
.tools svg { width: 32px; height: 32px; }

/* Mode selector */
.modes {
  grid-row: 2 / 4;
  display: flex;
  flex-direction: column;
  background: linear-gradient(90deg, #484848, #808080);
  border-right: 2px solid #333;
  color: #fff;
  font-size: 20px;
  font-weight: 700;
  line-height: 24px;
  min-height: 0;
}
.mode {
  flex: none;
  height: 104px;
  padding: 0 12px 7px 0;
  display: flex;
  flex-direction: column;
  align-items: center;
  justify-content: flex-end;
  gap: 4px;
}
.mode.active {
  background: linear-gradient(90deg, #aeaeae, #e8e8e8);
  border-top: 2px solid #333;
  border-bottom: 2px solid #eee;
  color: #3c3c3c;
  font-weight: 500;
}
.kit {
  margin-top: auto;
  height: 415px;
  border-top: 2px solid #888;
  display: flex;
  flex-direction: column;
  align-items: center;
  gap: 26px;
  padding-right: 12px;
}
.kit-select { padding-top: 12px; display: flex; flex-direction: column; align-items: center; }
.kit-name { font-weight: 600; }
.kit-device { padding: 26px 0 20px; display: flex; align-items: center; gap: 14px; margin-right: -22px; }
.kit-arrow { border: 8px solid transparent; border-left-color: #ddd; border-right: 0; }
.kit-build { margin-bottom: 24px; }

/* Widget box */
.widget-box {
  display: flex;
  flex-direction: column;
  min-height: 0;
  border-right: 2px solid #000;
}
.filter-wrap { flex: none; height: 46px; padding: 2px; background: linear-gradient(#858585, #484848); }
.filter {
  display: block;
  width: 100%;
  height: 42px;
  padding: 0 2px;
  border: 2px solid #111;
  border-radius: 5px;
  background: linear-gradient(#dedede, #fff 8px);
}
.filter::placeholder { color: #808080; opacity: 1; }
.widget-scroll { flex: 1; min-height: 0; display: flex; overflow: hidden; }
.widget-list { flex: 1; }
.widget-list ul { margin: 0; padding: 0; list-style: none; }
.widget-list li { height: 48px; display: flex; align-items: center; gap: 20px; padding-left: 12px; }
.widget-list li svg { width: 44px; height: 44px; filter: drop-shadow(1px 2px 1px rgba(0,0,0,.3)); }
.group-head {
  position: relative;
  display: block;
  width: 100%;
  height: 38px;
  padding: 2px 0 0 30px;
  background: linear-gradient(#efefef, #dcdcdc);
  border-top: 2px solid #9a9a9a;
  border-bottom: 2px solid #9a9a9a;
  box-shadow: inset 0 2px #fff;
}
.group-head:first-child { border-top-color: #f2f2f2; margin-top: -2px; }
.group-head::before {
  content: "";
  position: absolute;
  left: 10px;
  top: 9px;
  border: 9px solid transparent;
  border-top: 15px solid #8c8c8c;
  border-bottom: 0;
}
.vtrack { width: 30px; background: #fafafa; border-left: 2px solid #e8e8e8; padding: 2px 0 0 7px; }
.vthumb { width: 16px; height: 860px; border-radius: 8px; background: #c2c2c2; }

/* Form canvas */
.center { display: flex; flex-direction: column; min-width: 0; min-height: 0; }
.canvas { flex: 1; min-height: 0; overflow: hidden; padding: 22px 0 0 22px; }
.form { position: relative; }
.form-menubar { height: 44px; display: flex; justify-content: space-between; background: #fafafa; padding-left: 16px; }
.menu-placeholder { width: 164px; height: 42px; background: linear-gradient(#f8f8f8, #dadada 75%, #f6f6f6); }
.menu-more { width: 22px; padding-left: 3px; border: 2px solid #b0b0b0; border-right: 0; background: #f0f0f0; overflow: hidden; }
.form-toolbar { height: 26px; background: linear-gradient(#ececec, #c8c8c8); border-top: 1px solid #fff; border-bottom: 2px solid #aaa; }
.form-body {
  position: relative;
  height: 812px;
  background: radial-gradient(circle at 1px 1px, #b8b8b8 1px, transparent 1px) -1px -1px / 20px 20px #ececec;
}
.form-statusbar { height: 42px; border-top: 1px solid #707070; background: linear-gradient(#e8e8e8, #b0b0b0); }
.push-button {
  position: absolute;
  left: 72px;
  top: 88px;
  width: 438px;
  height: 198px;
  padding: 2px 0 0 10px;
  border: 2px solid #aaa;
  background: linear-gradient(#e4e4e4, #f6f6f6);
}
.pixmap-label {
  position: absolute;
  left: 138px;
  top: 510px;
  width: 282px;
  height: 122px;
  background: #000;
}
.pixmap-label i {
  position: absolute;
  width: 12px;
  height: 12px;
  margin: -6px;
  border: 2px solid #00f;
  background: #000;
}
.pixmap-label i:nth-child(1) { left: 0; top: 0; }
.pixmap-label i:nth-child(2) { left: 50%; top: 0; }
.pixmap-label i:nth-child(3) { left: 100%; top: 0; }
.pixmap-label i:nth-child(4) { left: 0; top: 50%; }
.pixmap-label i:nth-child(5) { left: 100%; top: 50%; }
.pixmap-label i:nth-child(6) { left: 0; top: 100%; }
.pixmap-label i:nth-child(7) { left: 50%; top: 100%; }
.pixmap-label i:nth-child(8) { left: 100%; top: 100%; }
.mark { position: absolute; pointer-events: none; fill: none; stroke: #ff2a1a; stroke-width: 5px; }
.form-mark { left: 34px; top: 446px; }
.htrack { flex: none; height: 31px; padding: 5px 45px 0 2px; background: #fafafa; border-top: 2px solid #e8e8e8; border-bottom: 2px solid #000; }
.hthumb { height: 16px; border-radius: 8px; background: #c2c2c2; }

/* Action editor */
.action-dock { flex: none; height: 348px; display: flex; flex-direction: column; }
.dock-bar { flex: none; height: 48px; display: flex; align-items: center; gap: 30px; padding: 0 2px 0 18px; }
.dock-bar .filter { width: 464px; margin-left: auto; height: 44px; }
table { border-collapse: separate; border-spacing: 0; width: 100%; table-layout: fixed; }
th {
  height: 34px;
  padding: 0 0 3px 8px;
  background: #f5f5f5;
  border-bottom: 2px solid #ccc;
  font-size: 22px;
  line-height: 26px;
  font-weight: 500;
  text-align: left;
}
th + th { background: linear-gradient(#dcdcdc, #dcdcdc) 0 4px / 2px 24px no-repeat #f5f5f5; padding-left: 10px; }
.actions th { width: 200px; }
.actions th:first-child { width: 198px; }
.actions th:last-child { width: auto; }
.dock-tabs {
  margin-top: auto;
  height: 46px;
  display: flex;
  background: #787878;
  border-top: 2px solid #444;
  border-bottom: 4px solid #4c4c4c;
  font-size: 22px;
  color: #1a1a1a;
}
.tab { padding: 0 25px; border-right: 2px solid #444; box-shadow: inset 0 1px #aaa; }
.tab.active { background: #a8a8a8; }

/* Object inspector */
.side { display: flex; flex-direction: column; min-height: 0; border-left: 2px solid #000; }
.objects {
  flex: none;
  height: 522px;
  padding-right: 26px;
  border-bottom: 2px solid #000;
  background: #fafafa;
}
.objects-body {
  height: 100%;
  border-right: 2px solid #e8e8e8;
  background: repeating-linear-gradient(#fff 0 36px, #eaf1fe 36px 72px) 0 34px no-repeat;
}
.tree th:first-child { width: 323px; }
.tree td { position: relative; height: 36px; padding: 0 0 0 11px; }
.tree td svg { display: inline-block; vertical-align: -8px; width: 32px; height: 32px; margin-right: 12px; }
.tree .has-icon svg { margin-right: 12px; }
.tree .selected { background: #dcdcdc; }
.tree .lv1 { padding-left: 50px; }
.tree .lv2 { padding-left: 90px; }
.tree .lv3 { padding-left: 130px; }
.tri {
  position: absolute;
  left: 14px;
  top: 12px;
  border: 9px solid transparent;
  border-top: 15px solid #8c8c8c;
  border-bottom: 0;
}
.tree .tri { top: 10px; left: 13px; }
.tree .lv2 .tri { left: 53px; }
.tri.closed { top: 10px; border: 9px solid transparent; border-left: 15px solid #8c8c8c; border-right: 0; }

/* Property editor */
.properties { flex: 1; min-height: 0; display: flex; flex-direction: column; }
.prop-bar { flex: none; height: 48px; display: flex; align-items: center; gap: 18px; padding-left: 2px; background: linear-gradient(#7a7a7a, #3f3f3f); }
.prop-bar .filter { width: 478px; height: 44px; margin-right: -6px; }
.object-name { flex: none; height: 37px; padding: 3px 5px; border: 1px solid #aaa; border-bottom-width: 2px; background: #eee; }
.prop-wrap { position: relative; flex: none; }
.props th { height: 37px; }
.props th:first-child { width: 275px; }
.props td {
  position: relative;
  height: 40px;
  padding: 1px 0 0 11px;
  border-bottom: 2px solid #aaa;
  white-space: nowrap;
}
.props td:first-child { padding-left: 50px; border-right: 2px solid #aaa; }
.props .h44 td { height: 44px; }
.props .h46 td { height: 46px; }
.props .group td { padding-left: 58px; background: #bebebe; color: #fff; font-weight: 600; border-right: 0; }
.group .tri { left: 16px; }
.props .changed { font-weight: 700; }
.props td.sub:first-child { padding-left: 90px; font-size: 26px; }
.cream td { background: #fff0dc; }
.pale td { background: #e6ffff; }
.aqua td { background: #c6ffff; }
.current td:first-child { background: #0064e4; color: #fff; }
.props .current td + td { padding: 0; }
.pix-edit { display: flex; align-items: center; height: 38px; }
.pix-edit span { flex: 1; }
.swatch { width: 33px; height: 19px; background: #000; }
.mini { width: 34px; height: 36px; border: 2px solid #7eb0e8; background: #f0f0f0; }
.narrow { width: 25px; display: grid; place-items: end center; padding-bottom: 4px; }
.reset { width: 34px; border-color: #bbb; display: grid; place-items: center; }
.props input[type="checkbox"] {
  appearance: none;
  display: block;
  width: 26px;
  height: 26px;
  margin: 0 0 0 4px;
  border: 2px solid #b8b8b8;
  border-radius: 5px;
  background: #fff;
}
.prop-mark { left: 30px; top: 251px; }
.prop-filler { flex: 1; background: repeating-linear-gradient(#fff 0 40px, #eaf1fe 40px 80px); }

/* Status bar */
.statusbar {
  grid-column: 2 / -1;
  display: flex;
  align-items: stretch;
  padding-top: 5px;
  background: linear-gradient(90deg, #2c2c2c, #4b4b4b 40%);
  border-top: 3px solid #333;
  box-shadow: inset 0 2px #6e6e6e;
  overflow: hidden;
}
.side-toggle { width: 22px; height: 22px; margin: 8px 30px 0 18px; border: 2px solid #666; border-left: 10px solid #666; background: #222; }
.locator {
  width: 468px;
  display: flex;
  align-items: center;
  gap: 10px;
  padding: 2px 0 0 8px;
  border: 2px solid #111;
  border-bottom: 0;
  border-radius: 5px 5px 0 0;
  background: linear-gradient(#dedede, #fff 8px);
}
.locator input { flex: 1; min-width: 0; border: 0; padding: 0; background: none; outline: 0; }
.locator input::placeholder { color: #808080; opacity: 1; }
.panes { display: flex; gap: 12px; padding-left: 21px; }
.pane { display: flex; border: 2px solid #777; border-bottom: 0; border-radius: 5px 5px 0 0; overflow: hidden; font-weight: 500; }
.pane b { width: 34px; display: grid; place-items: center; color: #fff; font-weight: 500; background: linear-gradient(#888, #666); border-right: 2px solid #444; }
.pane span { padding: 4px 7px 0; background: linear-gradient(#e6e6e6, #dcdcdc 50%, #cfcfcf 51%); }
.pane-more { width: 34px; border: 2px solid #999; border-bottom: 0; border-radius: 5px 5px 0 0; background: linear-gradient(#777, #5a5a5a); display: grid; place-items: center; }
.output-toggle { margin: 0 26px 0 auto; display: grid; place-items: center; padding-bottom: 4px; }

.watermark {
  position: absolute;
  right: 4px;
  bottom: 17px;
  color: #d0d0d0;
  font: 46px/52px "Liberation Sans", sans-serif;
  text-shadow: 1px 1px 1px rgba(0,0,0,.4);
  opacity: .9;
}
```
